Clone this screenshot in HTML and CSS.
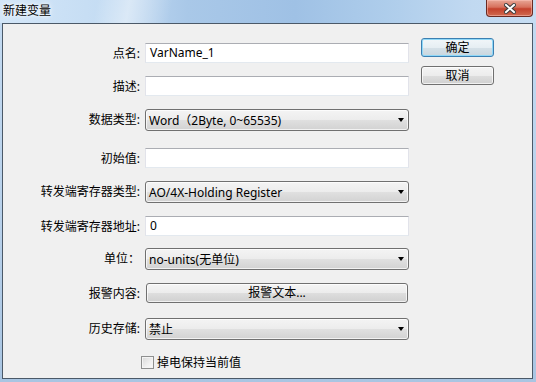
FILE: index.html
```html
<!DOCTYPE html>
<html lang="zh-CN">
<head>
  <meta charset="UTF-8">
  <title>新建变量</title>
  <link rel="stylesheet" href="styles.css">
</head>
<body>
  <div class="window">
    <div class="titlebar">
      <span class="title">新建变量</span>
      <div class="close">
        <svg width="12" height="11" viewBox="0 0 12 11">
          <path d="M2 2 L10 9 M10 2 L2 9" stroke="#3b3b3b" stroke-width="4" stroke-linecap="square"/>
          <path d="M2 2 L10 9 M10 2 L2 9" stroke="#fff" stroke-width="2" stroke-linecap="square"/>
        </svg>
      </div>
    </div>

    <div class="client">
      <div class="form">
        <div class="label">点名:</div>
        <div class="edit">VarName_1</div>

        <div class="label">描述:</div>
        <div class="edit"></div>

        <div class="label">数据类型:</div>
        <div class="combo"><span>Word（2Byte, 0~65535)</span><i class="arrow"></i></div>

        <div class="label">初始值:</div>
        <div class="edit"></div>

        <div class="label">转发端寄存器类型:</div>
        <div class="combo"><span>AO/4X-Holding Register</span><i class="arrow"></i></div>

        <div class="label">转发端寄存器地址:</div>
        <div class="edit">0</div>

        <div class="label">单位：</div>
        <div class="combo"><span>no-units(无单位)</span><i class="arrow"></i></div>

        <div class="label">报警内容:</div>
        <div class="push">报警文本...</div>

        <div class="label">历史存储:</div>
        <div class="combo"><span>禁止</span><i class="arrow"></i></div>

        <div class="check-row">
          <span class="checkbox"></span>
          <span>掉电保持当前值</span>
        </div>
      </div>

      <div class="actions">
        <div class="btn btn-default">确定</div>
        <div class="btn">取消</div>
      </div>
    </div>
  </div>
</body>
</html>
```

FILE: styles.css
```css
body {
  margin: 0;
  font-family: "Noto Sans", "Noto Sans CJK SC", sans-serif;
  font-size: 12px;
  color: #000;
}

.window {
  width: 536px;
  height: 382px;
  display: flex;
  flex-direction: column;
  background: linear-gradient(180deg, #c4dbf2 0%, #b7d0ea 60%, #a9c5e2 100%);
}

/* title bar */
.titlebar {
  height: 23px;
  display: flex;
  align-items: flex-start;
  padding-left: 3px;
  background:
    linear-gradient(100deg, rgba(255,255,255,0) 18%, rgba(255,255,255,0.45) 24%, rgba(255,255,255,0) 32%),
    linear-gradient(90deg, #d3e6f8 0%, #c4dcf3 20%, #a9c8e8 35%, #9fc1e5 55%, #aecdeb 72%, #c1d9f1 88%, #c6ddf3 100%);
}

.title {
  line-height: 20px;
  font-family: "Noto Sans CJK SC", sans-serif;
  text-shadow: 0 0 6px #fff, 0 0 3px #fff;
}

.close {
  margin-left: auto;
  margin-right: 3px;
  width: 47px;
  height: 17px;
  box-sizing: border-box;
  border: 1px solid #6a2a22;
  border-top: none;
  border-radius: 0 0 4px 4px;
  background: linear-gradient(180deg, #e8a696 0%, #d7705c 45%, #c4412c 55%, #d06a50 100%);
  box-shadow: inset 0 0 0 1px rgba(255, 200, 190, 0.5);
  display: flex;
  align-items: center;
  justify-content: center;
}

/* client area */
.client {
  flex: 1;
  display: flex;
  margin: 0 3px 3px 2px;
  border: 1px solid #4b5968;
  background: #f0f0f0;
}

.form {
  display: grid;
  grid-template-columns: 137px 264px;
  grid-template-rows: 33px 33px 39px 33px 35px 32px 35px 35px 37px auto;
  column-gap: 5px;
  align-items: start;
  padding-top: 19px;
}

.label {
  text-align: right;
  line-height: 21px;
  white-space: nowrap;
}

.edit {
  height: 20px;
  box-sizing: border-box;
  padding: 0 4px;
  line-height: 18px;
  background: #fff;
  border: 1px solid #e2e3ea;
  border-top-color: #abadb3;
  border-bottom-color: #e3e9ef;
}

.combo {
  height: 22px;
  box-sizing: border-box;
  display: flex;
  align-items: center;
  justify-content: space-between;
  padding: 0 4px 0 3px;
  border: 1px solid #707070;
  border-radius: 3px;
  background: linear-gradient(180deg, #f4f4f4 0%, #ececec 50%, #e0e0e0 51%, #d2d2d2 100%);
  box-shadow: inset 0 0 0 1px rgba(255, 255, 255, 0.7);
}

.arrow {
  width: 0;
  height: 0;
  border-left: 3px solid transparent;
  border-right: 3px solid transparent;
  border-top: 4px solid #000;
}

.push {
  height: 20px;
  box-sizing: border-box;
  margin-left: 1px;
  margin-right: 1px;
  line-height: 18px;
  text-align: center;
  border: 1px solid #707070;
  border-radius: 3px;
  background: linear-gradient(180deg, #f4f4f4 0%, #ececec 50%, #dedede 51%, #d0d0d0 100%);
  box-shadow: inset 0 0 0 1px rgba(255, 255, 255, 0.7);
}

.check-row {
  grid-column: 2;
  margin-left: -4px;
  display: flex;
  align-items: center;
  gap: 3px;
  line-height: 15px;
}

.checkbox {
  width: 13px;
  height: 13px;
  box-sizing: border-box;
  border: 1px solid #8e8f8f;
  background: linear-gradient(135deg, #d8d8d8 0%, #f0f0f0 60%, #fbfbfb 100%);
  box-shadow: inset 0 0 0 1px #f4f4f4;
}

/* right side buttons */
.actions {
  display: flex;
  flex-direction: column;
  gap: 9px;
  margin-left: 12px;
  padding-top: 14px;
}

.btn {
  width: 73px;
  height: 19px;
  box-sizing: border-box;
  line-height: 17px;
  text-align: center;
  border: 1px solid #707070;
  border-radius: 3px;
  background: linear-gradient(180deg, #f4f4f4 0%, #ececec 50%, #dedede 51%, #d0d0d0 100%);
  box-shadow: inset 0 0 0 1px rgba(255, 255, 255, 0.7);
}

.btn-default {
  border-color: #3c7fb1;
  background: linear-gradient(180deg, #f1f6f9 0%, #e6eef3 50%, #d6e1e8 51%, #c9d6de 100%);
  box-shadow: inset 0 0 0 1px #8fd8f8;
}
```
